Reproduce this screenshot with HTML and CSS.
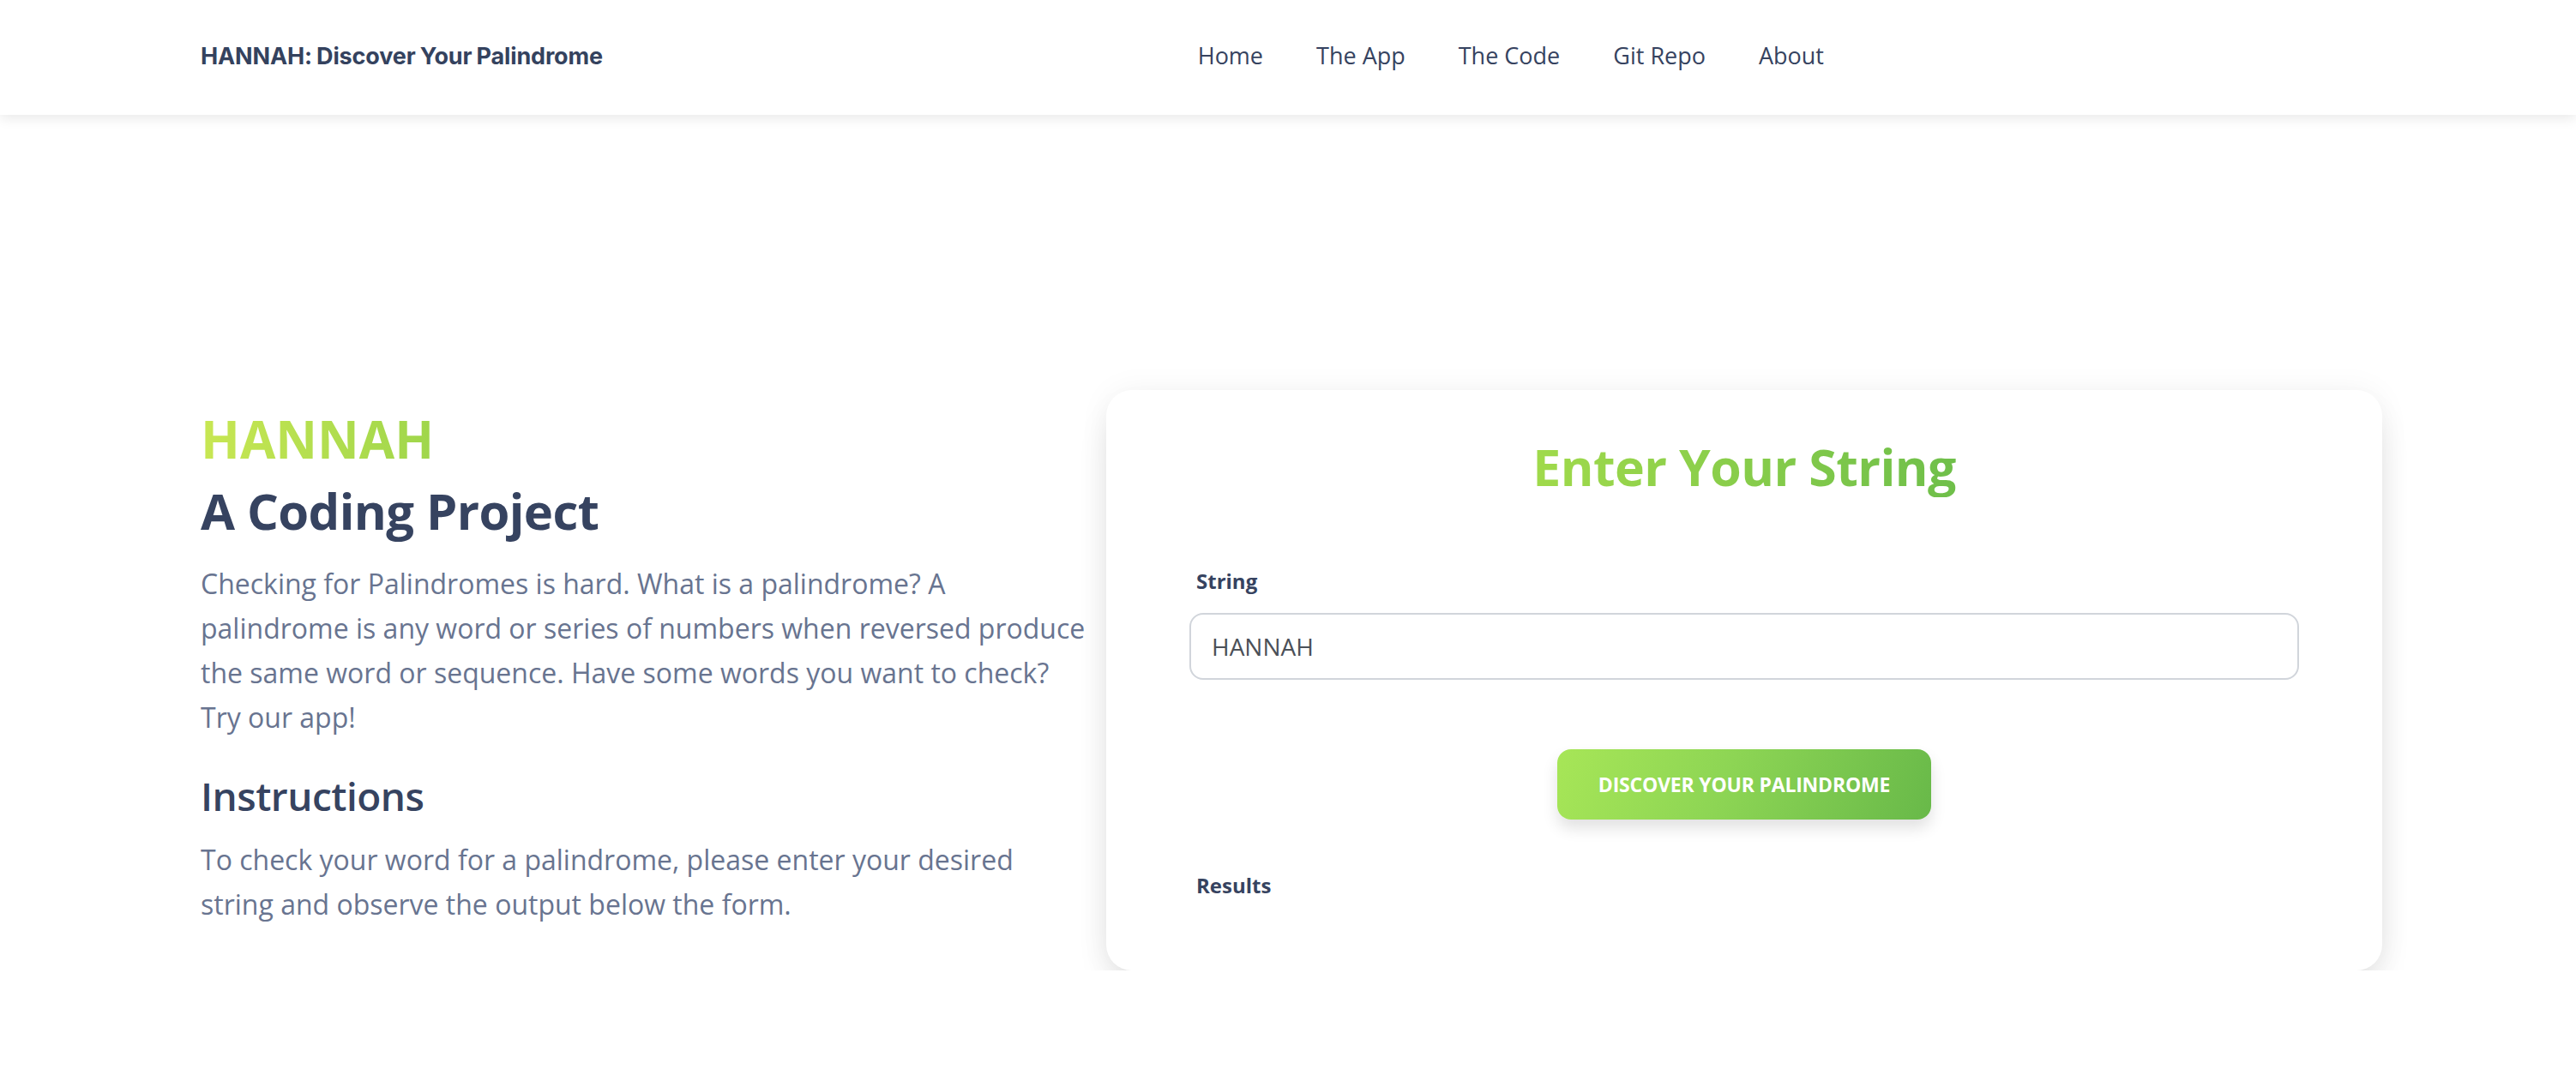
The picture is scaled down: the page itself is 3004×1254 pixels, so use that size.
FILE: index.html
```html
<!DOCTYPE html>
<html lang="en">
<head>
<meta charset="utf-8">
<title>HANNAH: Discover Your Palindrome</title>
<link rel="stylesheet" href="styles.css">
</head>
<body>
<header class="navbar">
  <div class="nav-inner">
    <a class="brand" href="#">HANNAH: Discover Your Palindrome</a>
    <ul class="nav-links">
      <li><a href="#">Home</a></li>
      <li><a href="#">The App</a></li>
      <li><a href="#">The Code</a></li>
      <li><a href="#">Git Repo</a></li>
      <li><a href="#">About</a></li>
    </ul>
  </div>
</header>
<main class="main">
  <div class="row">
    <section class="intro">
      <div class="eyebrow">HANNAH</div>
      <h1 class="title">A Coding Project</h1>
      <p class="lead">Checking for Palindromes is hard. What is a palindrome? A palindrome is any word or series of numbers when reversed produce the same word or sequence. Have some words you want to check? Try our app!</p>
      <h2 class="subtitle">Instructions</h2>
      <p class="lead">To check your word for a palindrome, please enter your desired string and observe the output below the form.</p>
    </section>
    <section class="card">
      <h2 class="card-title"><span class="grad">Enter Your String</span></h2>
      <label class="field-label" for="userString">String</label>
      <input class="field-input" id="userString" type="text" value="HANNAH">
      <div class="btn-row">
        <button class="btn" type="button">DISCOVER YOUR PALINDROME</button>
      </div>
      <div class="field-label results">Results</div>
    </section>
  </div>
</main>
</body>
</html>
```
FILE: styles.css
```css
* { box-sizing: border-box; }
html, body { margin: 0; padding: 0; background: #ffffff; }
body { font-family: "Open Sans", "Noto Sans", sans-serif; color: #364360; }

.navbar {
  height: 134px;
  background: #fff;
  box-shadow: 0 4px 14px rgba(0, 0, 0, 0.09);
  position: relative;
  z-index: 2;
}
.nav-inner {
  width: 2544px;
  margin-left: 234px;
  height: 100%;
  display: flex;
  align-items: center;
}
.brand {
  font-family: Inter, "Liberation Sans", Arial, sans-serif;
  font-weight: 700;
  font-size: 27px;
  letter-spacing: -0.15px;
  word-spacing: -1px;
  color: #34425e;
  text-decoration: none;
  margin-top: -4px;
}
.nav-links {
  list-style: none;
  margin: -4px 620px 0 auto;
  padding: 0;
  display: flex;
}
.nav-links a {
  display: block;
  padding: 0 31px;
  font-size: 27px;
  line-height: 40px;
  color: #364360;
  text-decoration: none;
}

.main { padding-top: 321px; }
.row {
  display: flex;
  align-items: flex-start;
  gap: 16px;
  margin-left: 234px;
}
.intro { width: 1040px; margin-top: 21px; }
.eyebrow {
  font-size: 60px;
  line-height: 72px;
  font-weight: 700;
  background: linear-gradient(90deg, #c8e753 0%, #9fd64b 100%);
  -webkit-background-clip: text;
  background-clip: text;
  color: transparent;
  display: inline-block;
}
.title {
  margin: 12px 0 0;
  font-size: 58px;
  line-height: 72px;
  font-weight: 700;
  letter-spacing: -0.6px;
  color: #364360;
}
.lead {
  margin: 23px 0 0;
  font-size: 32px;
  line-height: 52px;
  color: #687490;
}
.subtitle {
  margin: 33px 0 0;
  font-size: 46px;
  line-height: 64px;
  font-weight: 600;
  letter-spacing: -0.5px;
  color: #364360;
}
.subtitle + .lead { margin-top: 17px; }

.card {
  width: 1488px;
  background: #fff;
  border-radius: 30px;
  padding: 53px 97px 83px;
  box-shadow: 0 22px 44px -12px rgba(0, 0, 0, 0.16), 0 0 36px rgba(0, 0, 0, 0.05);
}
.card-title {
  margin: 0;
  text-align: center;
  font-size: 59px;
  line-height: 72px;
  font-weight: 700;
  letter-spacing: -0.6px;
}
.grad {
  display: inline-block;
  background: linear-gradient(90deg, #a0da4b 0%, #6fbf4a 100%);
  -webkit-background-clip: text;
  background-clip: text;
  color: transparent;
}
.field-label {
  display: block;
  margin: 82px 0 0 8px;
  font-size: 24px;
  line-height: 32px;
  font-weight: 700;
  color: #364360;
}
.field-input {
  display: block;
  width: 100%;
  height: 78px;
  margin-top: 21px;
  border: 2px solid #d1d5db;
  border-radius: 16px;
  padding: 0 24px;
  font-family: "Open Sans", sans-serif;
  font-size: 28px;
  color: #4b5058;
  background: #fff;
  outline: none;
}
.btn-row {
  display: flex;
  justify-content: center;
  margin-top: 81px;
}
.btn {
  height: 82px;
  width: 436px;
  border: none;
  border-radius: 16px;
  background: linear-gradient(110deg, #a7e657 0%, #8dd554 45%, #68b949 100%);
  color: #fff;
  font-family: "Open Sans", sans-serif;
  font-weight: 700;
  font-size: 23px;
  letter-spacing: -0.2px;
  box-shadow: 0 10px 18px rgba(0, 0, 0, 0.12);
  cursor: pointer;
}
.results { margin-top: 61px; }
```
